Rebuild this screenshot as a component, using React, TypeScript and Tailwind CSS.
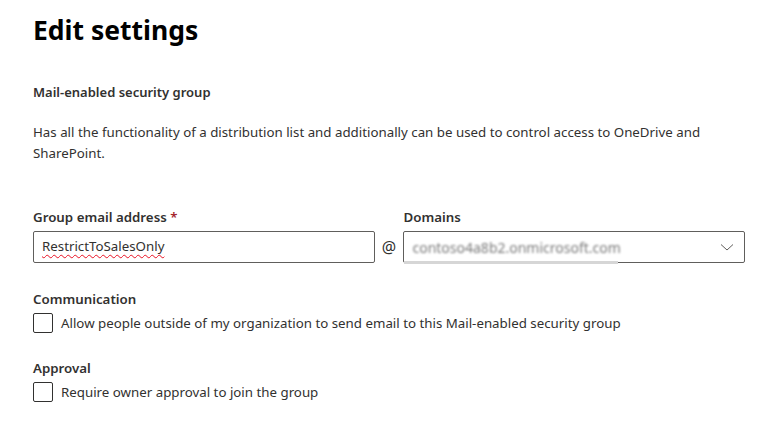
import React from "react";

const font = { fontFamily: '"Segoe UI", "Noto Sans", "Open Sans", sans-serif' };

function Checkbox() {
  return <div className="w-5 h-5 border border-[#323130] rounded-[2px] bg-white shrink-0" />;
}

export default function App() {
  return (
    <div className="w-[780px] h-[431px] bg-white text-[#323130] overflow-hidden" style={font}>
      <div className="pl-[33px] pr-[35px] pt-[10px]">
        <h1 className="text-[26.5px] font-bold leading-[40px] text-black">Edit settings</h1>
        <div className="mt-[32px] text-[13px] font-semibold leading-[20px]">Mail-enabled security group</div>
        <p className="mt-[20px] text-[13.3px] leading-[21px]">
          Has all the functionality of a distribution list and additionally can be used to control access to OneDrive and SharePoint.
        </p>
        <div className="mt-[43px] flex items-end">
          <div className="w-[342px]">
            <div className="text-[13.3px] font-semibold leading-[20px] mb-[4px]">
              Group email address <span className="text-[#a4262c]">*</span>
            </div>
            <div className="h-[32px] border border-[#605e5c] rounded-[2px] flex items-center px-[8px] text-[13.3px]">
              <span className="underline decoration-wavy decoration-[#e81123] decoration-1 underline-offset-[3px]">RestrictToSalesOnly</span>
            </div>
          </div>
          <div className="w-[29px] h-[32px] flex items-center justify-center text-[16px] text-[#323130]">@</div>
          <div className="w-[342px]">
            <div className="text-[13.3px] font-semibold leading-[20px] mb-[4px]">Domains</div>
            <div className="relative h-[32px] border border-[#605e5c] rounded-[2px] flex items-center px-[8px] text-[14px]">
              <span className="blur-[1.2px] text-[#7a7a7a]">contoso4a8b2.onmicrosoft.com</span>
              <div className="absolute left-0 bottom-[-2px] w-[214px] h-[3px] bg-[#d6d6d6]" />
              <svg className="absolute right-[10px] top-[10px]" width="14" height="10" viewBox="0 0 14 10" fill="none">
                <path d="M1 2.5 L7 8 L13 2.5" stroke="#605e5c" strokeWidth="1" />
              </svg>
            </div>
          </div>
        </div>
        <div className="mt-[26px] text-[13.3px] font-semibold leading-[20px]">Communication</div>
        <div className="mt-[4px] flex items-center gap-[8px] text-[13.3px] leading-[20px]">
          <Checkbox />
          <span>Allow people outside of my organization to send email to this Mail-enabled security group</span>
        </div>
        <div className="mt-[25px] text-[13.3px] font-semibold leading-[20px]">Approval</div>
        <div className="mt-[4px] flex items-center gap-[8px] text-[13.3px] leading-[20px]">
          <Checkbox />
          <span>Require owner approval to join the group</span>
        </div>
      </div>
    </div>
  );
}
